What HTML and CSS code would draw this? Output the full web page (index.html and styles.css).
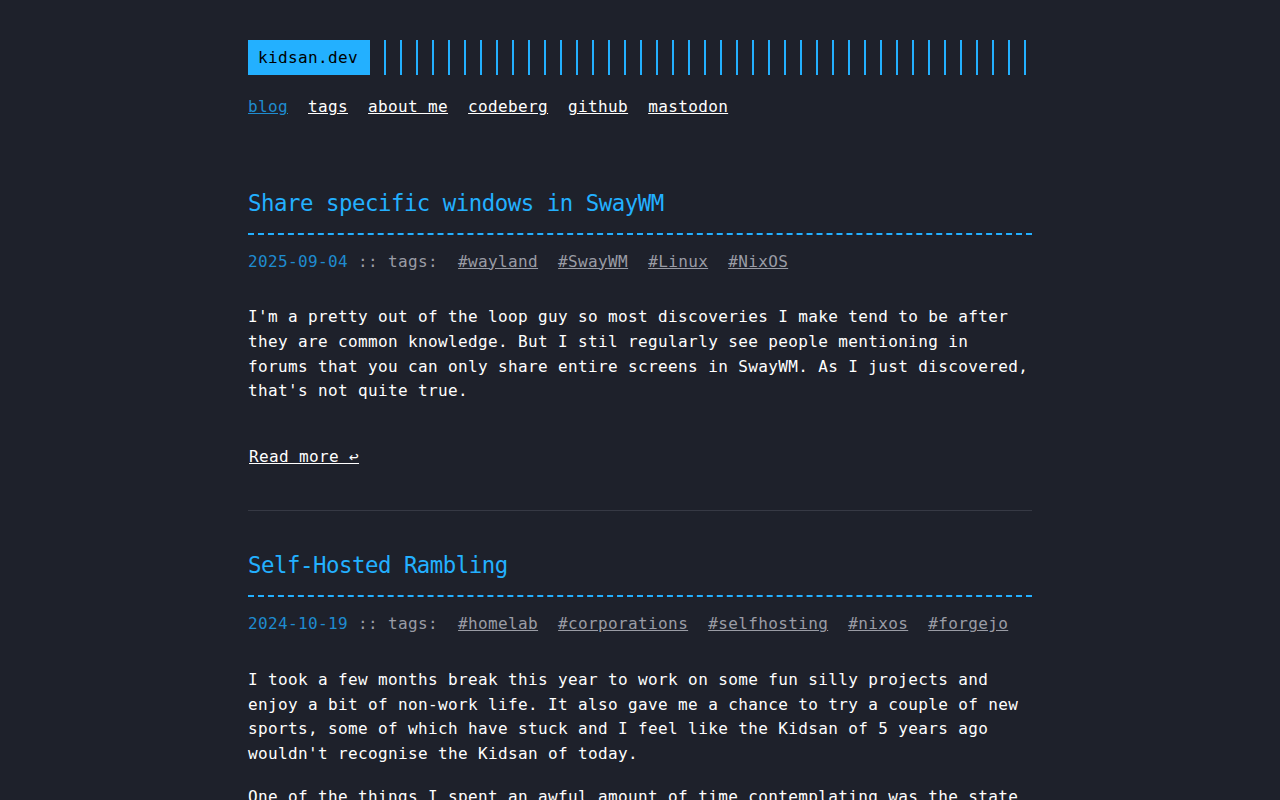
FILE: index.html
```html
<!DOCTYPE html>
<html lang="en">
  <head>
    <meta charset="UTF-8" />
    <meta name="viewport" content="width=device-width, initial-scale=1.0" />
    <title>kidsan.dev</title>
    <link rel="stylesheet" href="styles.css">
  </head>

  <body>
    <div class="container">
      <header class="header">
        <div class="header-logo">
          <a href="#" class="logo">kidsan.dev</a>
        </div>
        <nav class="menu">
          <a href="#" class="active">blog</a>
          <a href="#">tags</a>
          <a href="#">about me</a>
          <a href="#">codeberg</a>
          <a href="#">github</a>
          <a href="#">mastodon</a>
        </nav>
      </header>

      <main class="posts">
        <!-- Post 1 -->
        <article class="post">
          <h1 class="post-title"><a href="#">Share specific windows in SwayWM</a></h1>
          <div class="post-meta">
            <span class="post-date">2025-09-04</span><span> :: tags:</span><span class="post-tags">
              <a href="#">#wayland</a>
              <a href="#">#SwayWM</a>
              <a href="#">#Linux</a>
              <a href="#">#NixOS</a>
            </span>
          </div>
          <div class="post-content">
            <p>I'm a pretty out of the loop guy so most discoveries I make tend to be after they are common knowledge. But I stil regularly see people mentioning in forums that you can only share entire screens in SwayWM. As I just discovered, that's not quite true.</p>
          </div>
          <div class="read-more-wrap">
            <a href="#" class="read-more">Read more ↩</a>
          </div>
        </article>

        <!-- Post 2 -->
        <article class="post">
          <h1 class="post-title"><a href="#">Self-Hosted Rambling</a></h1>
          <div class="post-meta">
            <span class="post-date">2024-10-19</span><span> :: tags:</span><span class="post-tags">
              <a href="#">#homelab</a>
              <a href="#">#corporations</a>
              <a href="#">#selfhosting</a>
              <a href="#">#nixos</a>
              <a href="#">#forgejo</a>
            </span>
          </div>
          <div class="post-content">
            <p>I took a few months break this year to work on some fun silly projects and enjoy a bit of non-work life. It also gave me a chance to try a couple of new sports, some of which have stuck and I feel like the Kidsan of 5 years ago wouldn't recognise the Kidsan of today.</p>
            <p>One of the things I spent an awful amount of time contemplating was the state of the internet and how much of it is owned by a handful of companies.</p>
          </div>
          <div class="read-more-wrap">
            <a href="#" class="read-more">Read more ↩</a>
          </div>
        </article>
      </main>
    </div>
  </body>
</html>
```

FILE: styles.css
```css
/* General Styles */

body {
  font-family: "DejaVu Sans Mono", "Liberation Mono", monospace;
  font-size: 16px;
  line-height: 1.54;
  letter-spacing: 0.37px;
  margin: 0;
  padding: 0;
  background-color: #1e212b;
  color: #ffffff;
}

a {
  color: inherit;
}

.container {
  max-width: 864px;
  margin: 0 auto;
  padding: 40px;
  box-sizing: border-box;
}
/* Header */

.header-logo {
  display: flex;
}

.header-logo::after {
  content: "";
  flex: 1;
  margin-left: 14px;
  background: repeating-linear-gradient(
    90deg,
    #23b0ff,
    #23b0ff 2px,
    transparent 2px,
    transparent 16px
  );
}

.logo {
  display: block;
  width: 102px;
  background: #23b0ff;
  color: #000;
  text-decoration: none;
  padding: 5px 10px;
  line-height: 25px;
}

.menu {
  display: flex;
  gap: 20px;
  margin: 20px 0 0;
}

.menu a {
  color: #fff;
}

.menu a.active {
  color: #1f8cd0;
}
/* Posts */

.posts {
  padding-top: 68px;
}

.post {
  padding-bottom: 41px;
  border-bottom: 1px solid #363944;
  margin-bottom: 39px;
}

.post-title {
  font-size: 22.4px;
  font-weight: normal;
  letter-spacing: -0.49px;
  line-height: 30px;
  margin: 0;
  padding-bottom: 15px;
  border-bottom: 2px dashed #23b0ff;
}

.post-title a {
  color: #23b0ff;
  text-decoration: none;
}

.post-meta {
  margin-top: 15px;
  color: #9a9ca5;
}

.post-date {
  color: #1f8cd0;
}

.post-tags {
  display: inline-flex;
  gap: 20px;
  margin-left: 20px;
}

.post-tags a {
  color: #9a9ca5;
}

.post-content {
  margin-top: 31px;
}

.post-content p {
  margin: 0 0 18px;
}

.read-more-wrap {
  margin-top: 41px;
}

.read-more {
  margin-left: 1px;
  color: #fff;
}
```
